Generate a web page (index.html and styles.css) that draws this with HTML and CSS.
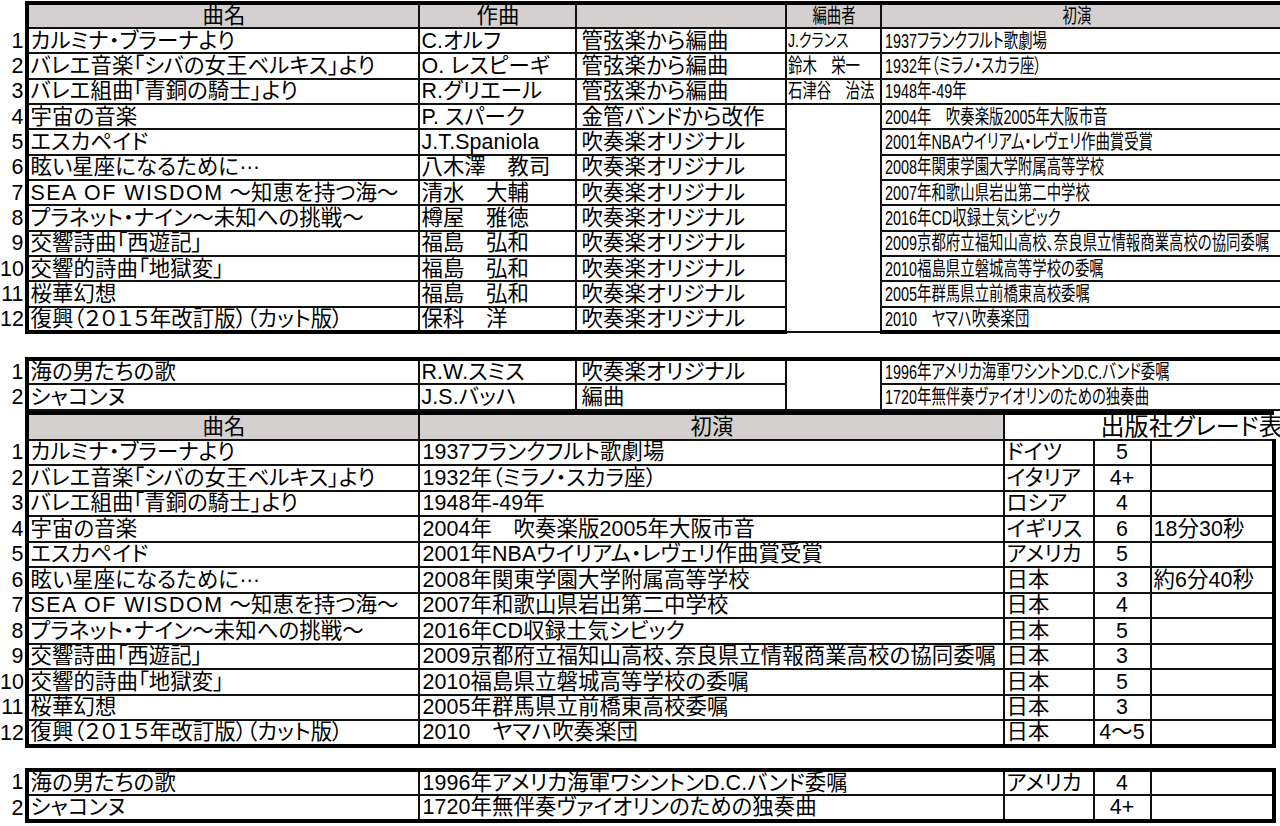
FILE: index.html
```html
<!DOCTYPE html>
<html lang="ja">
<head>
<meta charset="utf-8">
<title>曲目一覧</title>
<link rel="stylesheet" href="styles.css">
</head>
<body>
<div class="sheet">
  <table class="t1">
    <colgroup><col class="w-rn"><col class="w-name"><col class="w-comp"><col class="w-type"><col class="w-arr"><col class="w-prem1"></colgroup>
    <thead>
      <tr class="hd"><th class="rn"></th><th>曲名</th><th>作曲</th><th></th><th><span class="cond mid">編曲者</span></th><th class="prh"><span class="cond mid">初演</span></th></tr>
    </thead>
    <tbody>
      <tr><td class="rn">1</td><td>カルミナ・ブラーナより</td><td>C.オルフ</td><td class="ty">管弦楽から編曲</td><td class="arr"><span class="cond sm">J.クランス</span></td><td class="pr"><span class="cond">1937フランクフルト歌劇場</span></td></tr>
      <tr><td class="rn">2</td><td>バレエ音楽「シバの女王ベルキス」より</td><td>O. レスピーギ</td><td class="ty">管弦楽から編曲</td><td class="arr"><span class="cond">鈴木　栄一</span></td><td class="pr"><span class="cond">1932年（ミラノ・スカラ座）</span></td></tr>
      <tr><td class="rn">3</td><td>バレエ組曲「青銅の騎士」より</td><td>R.グリエール</td><td class="ty">管弦楽から編曲</td><td class="arr"><span class="cond">石津谷　治法</span></td><td class="pr"><span class="cond">1948年-49年</span></td></tr>
      <tr><td class="rn">4</td><td>宇宙の音楽</td><td>P. スパーク</td><td class="ty">金管バンドから改作</td><td class="arr merged" rowspan="9"></td><td class="pr"><span class="cond">2004年　吹奏楽版2005年大阪市音</span></td></tr>
      <tr><td class="rn">5</td><td>エスカペイド</td><td>J.T.Spaniola</td><td class="ty">吹奏楽オリジナル</td><td class="pr"><span class="cond">2001年NBAウイリアム・レヴェリ作曲賞受賞</span></td></tr>
      <tr><td class="rn">6</td><td>眩い星座になるために<span class="ell">…</span></td><td>八木澤　教司</td><td class="ty">吹奏楽オリジナル</td><td class="pr"><span class="cond">2008年関東学園大学附属高等学校</span></td></tr>
      <tr><td class="rn">7</td><td><span class="lat">SEA OF WISDOM</span> ～知恵を持つ海～</td><td>清水　大輔</td><td class="ty">吹奏楽オリジナル</td><td class="pr"><span class="cond">2007年和歌山県岩出第二中学校</span></td></tr>
      <tr><td class="rn">8</td><td>プラネット・ナイン～未知への挑戦～</td><td>樽屋　雅徳</td><td class="ty">吹奏楽オリジナル</td><td class="pr"><span class="cond">2016年CD収録土気シビック</span></td></tr>
      <tr><td class="rn">9</td><td>交響詩曲「西遊記」</td><td>福島　弘和</td><td class="ty">吹奏楽オリジナル</td><td class="pr"><span class="cond">2009京都府立福知山高校、奈良県立情報商業高校の協同委嘱</span></td></tr>
      <tr><td class="rn">10</td><td>交響的詩曲「地獄変」</td><td>福島　弘和</td><td class="ty">吹奏楽オリジナル</td><td class="pr"><span class="cond">2010福島県立磐城高等学校の委嘱</span></td></tr>
      <tr><td class="rn">11</td><td>桜華幻想</td><td>福島　弘和</td><td class="ty">吹奏楽オリジナル</td><td class="pr"><span class="cond">2005年群馬県立前橋東高校委嘱</span></td></tr>
      <tr class="last"><td class="rn">12</td><td>復興（２０１５年改訂版）（カット版）</td><td>保科　洋</td><td class="ty">吹奏楽オリジナル</td><td class="pr"><span class="cond">2010　ヤマハ吹奏楽団</span></td></tr>
    </tbody>
  </table>

  <table class="t1 t1b">
    <colgroup><col class="w-rn"><col class="w-name"><col class="w-comp"><col class="w-type"><col class="w-arr"><col class="w-prem1"></colgroup>
    <tbody>
      <tr class="first"><td class="rn">1</td><td>海の男たちの歌</td><td>R.W.スミス</td><td class="ty">吹奏楽オリジナル</td><td class="arr merged" rowspan="2"></td><td class="pr"><span class="cond">1996年アメリカ海軍ワシントンD.C.バンド委嘱</span></td></tr>
      <tr><td class="rn">2</td><td>シャコンヌ</td><td>J.S.バッハ</td><td class="ty">編曲</td><td class="pr"><span class="cond">1720年無伴奏ヴァイオリンのための独奏曲</span></td></tr>
    </tbody>
  </table>

  <table class="t2">
    <colgroup><col class="w-rn"><col class="w-name"><col class="w-prem2"><col class="w-ctry"><col class="w-grade"><col class="w-note"></colgroup>
    <thead>
      <tr class="hd"><th class="rn"></th><th>曲名</th><th>初演</th><th class="pub" colspan="3"><span>出版社グレード表記</span></th></tr>
    </thead>
    <tbody>
      <tr><td class="rn">1</td><td>カルミナ・ブラーナより</td><td class="p2">1937フランクフルト歌劇場</td><td>ドイツ</td><td class="gr">5</td><td class="nt"></td></tr>
      <tr><td class="rn">2</td><td>バレエ音楽「シバの女王ベルキス」より</td><td class="p2">1932年（ミラノ・スカラ座）</td><td>イタリア</td><td class="gr">4+</td><td class="nt"></td></tr>
      <tr><td class="rn">3</td><td>バレエ組曲「青銅の騎士」より</td><td class="p2">1948年-49年</td><td>ロシア</td><td class="gr">4</td><td class="nt"></td></tr>
      <tr><td class="rn">4</td><td>宇宙の音楽</td><td class="p2">2004年　吹奏楽版2005年大阪市音</td><td>イギリス</td><td class="gr">6</td><td class="nt">18分30秒</td></tr>
      <tr><td class="rn">5</td><td>エスカペイド</td><td class="p2">2001年NBAウイリアム・レヴェリ作曲賞受賞</td><td>アメリカ</td><td class="gr">5</td><td class="nt"></td></tr>
      <tr><td class="rn">6</td><td>眩い星座になるために<span class="ell">…</span></td><td class="p2">2008年関東学園大学附属高等学校</td><td>日本</td><td class="gr">3</td><td class="nt">約6分40秒</td></tr>
      <tr><td class="rn">7</td><td><span class="lat">SEA OF WISDOM</span> ～知恵を持つ海～</td><td class="p2">2007年和歌山県岩出第二中学校</td><td>日本</td><td class="gr">4</td><td class="nt"></td></tr>
      <tr><td class="rn">8</td><td>プラネット・ナイン～未知への挑戦～</td><td class="p2">2016年CD収録土気シビック</td><td>日本</td><td class="gr">5</td><td class="nt"></td></tr>
      <tr><td class="rn">9</td><td>交響詩曲「西遊記」</td><td class="p2">2009京都府立福知山高校、奈良県立情報商業高校の協同委嘱</td><td>日本</td><td class="gr">3</td><td class="nt"></td></tr>
      <tr><td class="rn">10</td><td>交響的詩曲「地獄変」</td><td class="p2">2010福島県立磐城高等学校の委嘱</td><td>日本</td><td class="gr">5</td><td class="nt"></td></tr>
      <tr><td class="rn">11</td><td>桜華幻想</td><td class="p2">2005年群馬県立前橋東高校委嘱</td><td>日本</td><td class="gr">3</td><td class="nt"></td></tr>
      <tr class="last"><td class="rn">12</td><td>復興（２０１５年改訂版）（カット版）</td><td class="p2">2010　ヤマハ吹奏楽団</td><td>日本</td><td class="gr">4～5</td><td class="nt"></td></tr>
    </tbody>
  </table>

  <table class="t2 t3">
    <colgroup><col class="w-rn"><col class="w-name"><col class="w-prem2"><col class="w-ctry"><col class="w-grade"><col class="w-note"></colgroup>
    <tbody>
      <tr class="first"><td class="rn">1</td><td>海の男たちの歌</td><td class="p2">1996年アメリカ海軍ワシントンD.C.バンド委嘱</td><td>アメリカ</td><td class="gr">4</td><td class="nt"></td></tr>
      <tr class="last"><td class="rn">2</td><td>シャコンヌ</td><td class="p2">1720年無伴奏ヴァイオリンのための独奏曲</td><td></td><td class="gr">4+</td><td class="nt"></td></tr>
    </tbody>
  </table>
</div>
</body>
</html>
```

FILE: styles.css
```css
html, body {
  margin: 0;
  padding: 0;
  background: #fff;
  overflow: hidden;
}

body {
  width: 1280px;
  height: 826px;
  font-family: "Liberation Sans", "Noto Sans CJK JP", sans-serif;
  color: #000;
}

.sheet {
  display: flex;
  flex-direction: column;
  align-items: flex-start;
  padding-top: 1px;
}

table {
  border-collapse: collapse;
  table-layout: fixed;
  font-size: 21.4px;
  letter-spacing: 0.1px;
  font-feature-settings: "palt";
}

td, th {
  padding: 0 0 0 2px;
  border: 2px solid #111;
  white-space: nowrap;
  overflow: hidden;
  font-weight: normal;
  line-height: 22px;
  vertical-align: middle;
  text-align: left;
}

td.rn, th.rn {
  border: none;
  text-align: right;
  padding: 0 1px 0 0;
  background: #fff;
  letter-spacing: 0;
}

/* column widths */
.w-rn { width: 26.5px; }
.w-name { width: 392px; }
.w-comp { width: 157px; }
.w-type { width: 210px; }
.w-arr { width: 95px; }
.w-prem1 { width: 420px; }
.w-prem2 { width: 585px; }
.w-ctry { width: 90px; }
.w-grade { width: 57px; }
.w-note { width: 123px; }

.t1 { width: 1300.5px; }
.t2 { width: 1273.5px; }

.t1 tr { height: 25.33px; }
.t2 tr { height: 25.5px; }
tr.hd { height: 25px; }

tr > :nth-child(2) { border-left: 4px solid #000; }

.hd > th:not(.rn) {
  border-top: 4px solid #000;
  background: #d3d0cf;
  text-align: center;
}

.hd > th.prh { padding-right: 30px; }

tr.first > td:not(.rn) { border-top: 4px solid #000; }
tr.last > td:not(.rn) { border-bottom: 4px solid #000; }

td.ty { padding-left: 5px; }
td.pr { padding-left: 3px; }
td.arr { padding-left: 1px; }
td.merged { border-bottom: 2px solid #111; }

.cond {
  display: inline-block;
  font-size: 20px;
  letter-spacing: 0;
  transform: scaleX(0.72);
  transform-origin: 0 50%;
}

.cond.sm { font-size: 18px; transform: scaleX(0.78); }
.cond.mid { transform-origin: 50% 50%; }

.ell {
  line-height: 0;
  vertical-align: 5px;
}

.lat { letter-spacing: 1.5px; }

/* layout of stacked blocks */
.t1b { margin-top: 23px; }
.t1b tr:last-child > td:not(.rn) { border-bottom: 2px solid #111; }

.t2 .nt { border-right: 4px solid #000; }
.t2 .gr { text-align: center; padding: 0; }
.t2 td.p2 { padding-left: 3px; }

.t2 th.pub {
  background: #fff;
  overflow: visible;
  border-right: none;
  font-size: 24px;
  text-align: left;
  padding-left: 96px;
  vertical-align: bottom;
  line-height: 24px;
}

.t3 { margin-top: 20px; }
```
